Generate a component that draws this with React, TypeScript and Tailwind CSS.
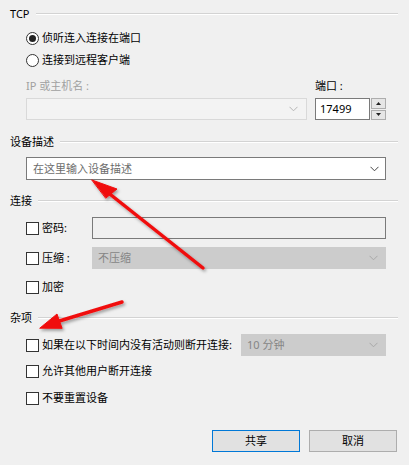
import React from "react";

// 共享设备对话框（TCP 设置）
const font = "font-['Noto_Sans','Noto_Sans_CJK_SC',sans-serif]";

function GroupHeader({ title, className = "" }: { title: string; className?: string }) {
  return (
    <div className={`flex h-4 items-center gap-[6px] ${className}`}>
      <span className="leading-4 text-black">{title}</span>
      <div className="h-[2px] flex-1 border-t border-b border-t-[#d3d3d3] border-b-white" />
    </div>
  );
}

function Check({ label, className = "" }: { label: string; className?: string }) {
  return (
    <label className={`flex h-4 items-center gap-[3px] ${className}`}>
      <span className="h-[13px] w-[13px] shrink-0 border border-[#333] bg-white" />
      <span className="whitespace-pre leading-4">{label}</span>
    </label>
  );
}

function Radio({ label, checked, className = "" }: { label: string; checked?: boolean; className?: string }) {
  return (
    <label className={`flex h-4 items-center gap-[3px] ${className}`}>
      <span className="flex h-[13px] w-[13px] shrink-0 items-center justify-center rounded-full border border-[#333] bg-white">
        {checked && <span className="h-[7px] w-[7px] rounded-full bg-[#222]" />}
      </span>
      <span className="whitespace-nowrap leading-4">{label}</span>
    </label>
  );
}

function Chevron({ color = "#555" }: { color?: string }) {
  return (
    <svg width="9" height="6" viewBox="0 0 9 6" className="shrink-0">
      <path d="M0.5 0.8 L4.5 4.8 L8.5 0.8" fill="none" stroke={color} strokeWidth="1" />
    </svg>
  );
}

function DisabledSelect({ text, className = "" }: { text: string; className?: string }) {
  return (
    <div className={`flex h-[22px] items-center justify-between border border-[#cccccc] bg-[#cccccc] pl-[5px] pr-[7px] ${className}`}>
      <span className="leading-4 text-[#858585]">{text}</span>
      <Chevron color="#a8a8a8" />
    </div>
  );
}

function Arrows() {
  return (
    <svg className="pointer-events-none absolute inset-0" width="409" height="465" viewBox="0 0 409 465">
      <defs>
        <filter id="sh" x="-20%" y="-20%" width="140%" height="140%">
          <feDropShadow dx="1.5" dy="2" stdDeviation="1.6" floodColor="#000" floodOpacity="0.35" />
        </filter>
      </defs>
      <g filter="url(#sh)" fill="#f01010" stroke="#f01010" strokeLinecap="round">
        <line x1="203" y1="268" x2="106" y2="191" strokeWidth="3.5" />
        <polygon points="92,180 117,189 106,198" strokeWidth="1" strokeLinejoin="round" />
        <line x1="122" y1="302" x2="56" y2="322" strokeWidth="3.5" />
        <polygon points="40,328 57,314 62,328" strokeWidth="1" strokeLinejoin="round" />
      </g>
    </svg>
  );
}

export default function App() {
  return (
    <div className={`relative h-[465px] w-[409px] overflow-hidden bg-[#f0f0f0] pl-[10px] pr-[11px] pt-[6px] text-[11px] text-black ${font}`}>
      <GroupHeader title="TCP" />

      <div className="pl-4">
        <Radio label="侦听连入连接在端口" checked className="mt-2" />
        <Radio label="连接到远程客户端" className="mt-[6px]" />

        <div className="mt-[10px] flex gap-2">
          <div className="flex w-[281px] flex-col">
            <span className="h-4 whitespace-pre leading-4 text-[#a0a0a0]">IP 或主机名 :</span>
            <div className="mt-1 flex h-[22px] items-center justify-end border border-[#d9d9d9] bg-[#f3f3f3] pr-[4px]">
              <div className="flex h-full w-[17px] items-center justify-center">
                <Chevron color="#b5b5b5" />
              </div>
            </div>
          </div>
          <div className="flex flex-col">
            <span className="h-4 whitespace-pre leading-4">端口 :</span>
            <div className="mt-1 flex h-[22px]">
              <div className="flex w-[55px] items-center border border-[#7a7a7a] bg-white pl-[4px] leading-4">17499</div>
              <div className="ml-px flex w-[15px] flex-col gap-px">
                <div className="flex flex-1 items-center justify-center border border-[#adadad] bg-[#e6e6e6]">
                  <svg width="5" height="3" viewBox="0 0 5 3"><path d="M0 3 L2.5 0 L5 3Z" fill="#222" /></svg>
                </div>
                <div className="flex flex-1 items-center justify-center border border-[#adadad] bg-[#e6e6e6]">
                  <svg width="5" height="3" viewBox="0 0 5 3"><path d="M0 0 L2.5 3 L5 0Z" fill="#222" /></svg>
                </div>
              </div>
            </div>
          </div>
        </div>
      </div>

      <GroupHeader title="设备描述" className="mt-[14px]" />
      <div className="ml-4 mr-[12px] mt-[7px] flex h-[23px] items-center justify-between border border-[#7a7a7a] bg-white pl-[6px] pr-[6px]">
        <span className="leading-4 text-[#6d6d6d]">在这里输入设备描述</span>
        <Chevron color="#444" />
      </div>

      <GroupHeader title="连接" className="mt-[13px]" />
      <div className="mr-[12px] pl-4">
        <div className="mt-2 flex h-[22px] items-center">
          <Check label="密码:" className="w-[66px]" />
          <div className="h-[22px] flex-1 border border-[#7a7a7a] bg-[#f0f0f0]" />
        </div>
        <div className="mt-2 flex h-[22px] items-center">
          <Check label="压缩 :" className="w-[66px]" />
          <DisabledSelect text="不压缩" className="flex-1" />
        </div>
        <Check label="加密" className="mt-[10px]" />
      </div>

      <GroupHeader title="杂项" className="mt-[15px]" />
      <div className="mr-[12px] pl-4">
        <div className="mt-2 flex h-[22px] items-center">
          <Check label="如果在以下时间内没有活动则断开连接:" className="w-[215px]" />
          <DisabledSelect text="10 分钟" className="flex-1" />
        </div>
        <Check label="允许其他用户断开连接" className="mt-[7px]" />
        <Check label="不要重置设备" className="mt-[11px]" />
      </div>

      <div className="mt-[24px] flex justify-end gap-[9px] pr-[1px]">
        <button className="h-[22px] w-[88px] border border-[#0078d7] bg-[#e1e1e1] leading-4">共享</button>
        <button className="h-[22px] w-[88px] border border-[#adadad] bg-[#e1e1e1] leading-4">取消</button>
      </div>

      <Arrows />
    </div>
  );
}
